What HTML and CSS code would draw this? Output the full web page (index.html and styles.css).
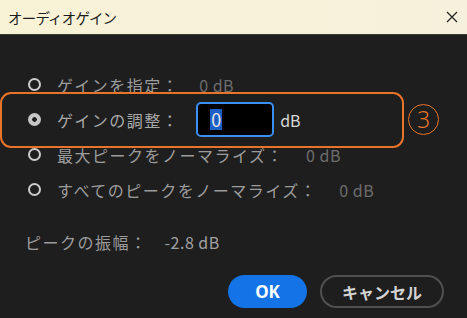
FILE: index.html
```html
<!DOCTYPE html>
<html lang="ja">
<head>
<meta charset="utf-8">
<link rel="stylesheet" href="styles.css">
</head>
<body>
<div class="dialog">
  <div class="titlebar">
    <span class="title">オーディオゲイン</span>
    <svg class="close" width="12" height="12" viewBox="0 0 12 12"><path d="M1 1L11 11M11 1L1 11" stroke="#222" stroke-width="1.2" fill="none"/></svg>
  </div>
  <div class="content">
    <div class="row">
      <span class="radio"></span>
      <span class="label">ゲインを指定：</span>
      <span class="value v1">0 dB</span>
    </div>
    <div class="row row-active">
      <span class="annot"></span>
      <span class="radio checked"></span>
      <span class="label label-active">ゲインの調整：</span>
      <span class="input"><span class="sel">0</span></span>
      <span class="unit">dB</span>
      <span class="badge">3</span>
    </div>
    <div class="row">
      <span class="radio"></span>
      <span class="label">最大ピークをノーマライズ：</span>
      <span class="value v3">0 dB</span>
    </div>
    <div class="row">
      <span class="radio"></span>
      <span class="label">すべてのピークをノーマライズ：</span>
      <span class="value v3">0 dB</span>
    </div>
    <div class="peak">
      <span class="label">ピークの振幅：</span>
      <span class="peakval">-2.8 dB</span>
    </div>
    <div class="buttons">
      <span class="btn ok">OK</span>
      <span class="btn cancel">キャンセル</span>
    </div>
  </div>
</div>
</body>
</html>
```
FILE: styles.css
```css
html, body {
  margin: 0;
  padding: 0;
  background: #1e1e1e;
}
body {
  width: 467px;
  height: 318px;
  overflow: hidden;
  font-family: "Noto Sans CJK JP", "Noto Sans", sans-serif;
}
.dialog {
  display: flex;
  flex-direction: column;
  height: 318px;
}
.titlebar {
  height: 34px;
  background: linear-gradient(90deg, #f8f2d6, #f6f1dc);
  border-bottom: 1px solid #3a3a30;
  display: flex;
  align-items: center;
  justify-content: space-between;
  padding: 0 9px 0 8px;
  box-sizing: content-box;
}
.title {
  font-size: 14.5px;
  color: #1c1c1c;
  letter-spacing: -0.8px;
}
.close {
  display: block;
}
.content {
  padding: 32px 0 0 0;
  display: flex;
  flex-direction: column;
}
.row {
  height: 35px;
  display: flex;
  align-items: center;
  padding-left: 28px;
  position: relative;
}
.radio {
  width: 13px;
  height: 13px;
  box-sizing: border-box;
  border-radius: 50%;
  border: 2.5px solid #cdcdcd;
  background: #1e1e1e;
  flex: none;
}
.radio.checked {
  border: none;
  background: radial-gradient(circle, #1e1e1e 0 2px, #c6c6c6 2.6px);
}
.label {
  margin-left: 16px;
  font-size: 16px;
  letter-spacing: 1.5px;
  color: #9c9c9c;
  white-space: nowrap;
}
.label-active {
  color: #a8a8a8;
}
.value {
  font-size: 16px;
  letter-spacing: 0.5px;
  color: #6c6c6c;
  margin-left: 20px;
}
.v3 {
  margin-left: 22px;
}
.input {
  margin-left: 17px;
  width: 78px;
  height: 35px;
  box-sizing: border-box;
  border: 2px solid #3a8ff0;
  border-radius: 5px;
  background: #000;
  display: flex;
  align-items: center;
  padding-left: 12px;
}
.sel {
  background: #1d5fc4;
  color: #e8e8e8;
  font-size: 18px;
  line-height: 21px;
  padding: 0 1px;
}
.unit {
  margin-left: 6px;
  font-size: 16px;
  color: #d8d8d8;
}
.annot {
  position: absolute;
  left: 0;
  top: -10px;
  width: 404px;
  height: 56px;
  box-sizing: border-box;
  border: 2px solid #e8732a;
  border-radius: 11px;
  pointer-events: none;
}
.badge {
  position: absolute;
  left: 408px;
  top: 2px;
  width: 31px;
  height: 31px;
  box-sizing: border-box;
  border: 1.5px solid #e8732a;
  border-radius: 50%;
  color: #e8732a;
  font-family: "Noto Sans", sans-serif;
  font-weight: 300;
  font-size: 23px;
  line-height: 28px;
  text-align: center;
}
.peak {
  margin-top: 24px;
  padding-left: 25px;
  height: 22px;
  display: flex;
  align-items: center;
}
.peak .label {
  margin-left: 0;
}
.peakval {
  margin-left: 17px;
  font-size: 16px;
  letter-spacing: 0.5px;
  color: #a0a0a0;
}
.buttons {
  margin-top: 22px;
  display: flex;
  justify-content: flex-end;
  gap: 13px;
  padding-right: 23px;
}
.btn {
  height: 33px;
  box-sizing: border-box;
  border-radius: 17px;
  display: flex;
  align-items: center;
  justify-content: center;
  font-weight: bold;
  font-size: 16px;
}
.ok {
  width: 79px;
  background: #1473e6;
  color: #fff;
  font-family: "Noto Sans", sans-serif;
  font-size: 17px;
}
.cancel {
  width: 124px;
  border: 2px solid #505050;
  color: #d4d4d4;
}
```
